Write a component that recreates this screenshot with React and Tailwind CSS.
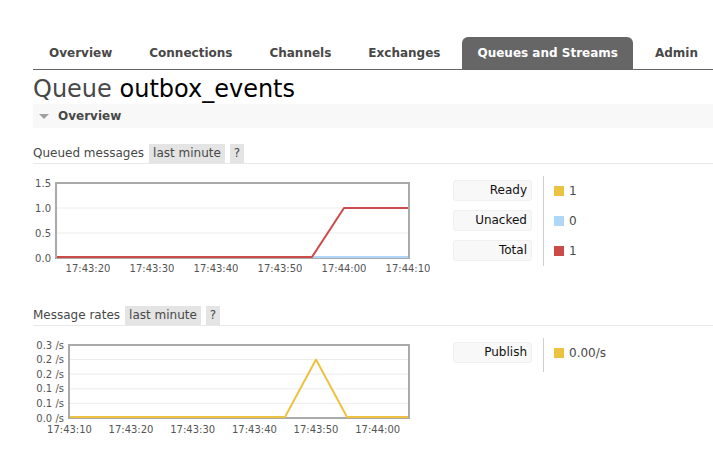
import React from "react";

const tabs = ["Overview", "Connections", "Channels", "Exchanges", "Queues and Streams", "Admin"];
const active = "Queues and Streams";

const SectionHead = ({ title }) => (
  <div className="flex items-stretch h-[20px] border-b border-[#e8e8e8]">
    <span className="leading-[19px] text-[12px] pr-[5px]">{title}</span>
    <span className="leading-[19px] text-[12px] bg-[#e4e4e4] px-[4px]">last minute</span>
    <span className="leading-[19px] text-[12px] bg-[#e4e4e4] px-[4px] ml-[5px]">?</span>
  </div>
);

const Legend = ({ rows, bottom }) => (
  <div className="flex mt-[12px]">
    <div className="flex flex-col gap-[9px] pt-[4px]">
      {rows.map((r) => (
        <div key={r.label} className="w-[79px] h-[21px] bg-[#f8f8f8] border border-[#f0f0f0] rounded-[3px] text-right pr-[4px] text-[12px] leading-[19px] text-[#111]">
          {r.label}
        </div>
      ))}
    </div>
    <div className={"ml-[11px] border-l border-[#cfcfcf] pl-[10px] flex flex-col gap-[9px] pt-[4px] " + bottom}>
      {rows.map((r) => (
        <div key={r.label} className="h-[21px] flex items-center gap-[5px] text-[12px]">
          <span className={"w-[10px] h-[10px] " + r.swatch} />
          <span>{r.value}</span>
        </div>
      ))}
    </div>
  </div>
);

const QueuedChart = () => {
  const yl = [["1.5", 19], ["1.0", 44], ["0.5", 69], ["0.0", 94]];
  const xl = [["17:43:20", 55], ["17:43:30", 119], ["17:43:40", 183], ["17:43:50", 247], ["17:44:00", 311], ["17:44:10", 375]];
  return (
    <svg width="420" height="112" className="shrink-0">
      <rect x="23" y="19" width="353" height="75" fill="#fff" stroke="#aaa" strokeWidth="2" />
      <line x1="24" x2="375" y1="44" y2="44" stroke="#ececec" />
      <line x1="24" x2="375" y1="69" y2="69" stroke="#ececec" />
      <polyline points="279,93 375,93" fill="none" stroke="#afd8f8" strokeWidth="2" />
      <polyline points="24,93 279,93 311,44 375,44" fill="none" stroke="#cb4b4b" strokeWidth="2" strokeLinejoin="round" />
      {yl.map(([t, y]) => (
        <text key={t} x="18" y={y + 3.6} textAnchor="end" fontSize="10" fill="#545454">{t}</text>
      ))}
      {xl.map(([t, x]) => (
        <text key={t} x={x} y="108" textAnchor="middle" fontSize="10" fill="#545454">{t}</text>
      ))}
    </svg>
  );
};

const RatesChart = () => {
  const yl = [["0.3 /s", 19], ["0.2 /s", 33.6], ["0.2 /s", 48.2], ["0.1 /s", 62.8], ["0.1 /s", 77.4], ["0.0 /s", 92]];
  const xl = [["17:43:10", 36.5], ["17:43:20", 98], ["17:43:30", 159.7], ["17:43:40", 221.4], ["17:43:50", 283], ["17:44:00", 344.7]];
  return (
    <svg width="420" height="112" className="shrink-0">
      <rect x="36" y="19" width="340" height="73" fill="#fff" stroke="#aaa" strokeWidth="2" />
      {[33.6, 48.2, 62.8, 77.4].map((y) => (
        <line key={y} x1="37" x2="375" y1={y} y2={y} stroke="#ececec" />
      ))}
      <polyline points="37,91 252,91 283,33.6 314,91 375,91" fill="none" stroke="#edc240" strokeWidth="2" strokeLinejoin="round" />
      {yl.map(([t, y], i) => (
        <text key={i} x="31" y={y + 3.6} textAnchor="end" fontSize="10" fill="#545454">{t}</text>
      ))}
      {xl.map(([t, x]) => (
        <text key={t} x={x} y="107" textAnchor="middle" fontSize="10" fill="#545454">{t}</text>
      ))}
    </svg>
  );
};

export default function App() {
  return (
    <div className="bg-white min-h-[460px] pl-[33px] font-['DejaVu_Sans',sans-serif] text-[#484848] overflow-hidden">
      <ul className="flex gap-[7px] pt-[37px] border-b border-[#666]">
        {tabs.map((t, i) => (
          <li
            key={t}
            className={
              "h-8 shrink-0 whitespace-nowrap flex items-center px-[15px] text-[12px] font-bold rounded-t-[6px] " +
              (i === 0 ? "ml-px " : "") +
              (t === active ? "bg-[#666] text-white" : "text-[#484848]")
            }
          >
            {t}
          </li>
        ))}
      </ul>

      <h1 className="pt-[4px] text-[24px] leading-[30px]">
        Queue <span className="text-black">outbox_events</span>
      </h1>

      <div className="h-[24px] bg-[#f8f8f8] flex items-center">
        <span className="ml-[6px] w-0 h-0 border-l-[5px] border-r-[5px] border-t-[5px] border-l-transparent border-r-transparent border-t-[#a0a0a0]" />
        <span className="ml-[9px] text-[12px] font-bold">Overview</span>
      </div>

      <div className="mt-4">
        <SectionHead title="Queued messages" />
        <div className="flex items-start h-[142px]">
          <QueuedChart />
          <Legend
            bottom="pb-[5px]"
            rows={[
              { label: "Ready", value: "1", swatch: "bg-[#edc240]" },
              { label: "Unacked", value: "0", swatch: "bg-[#afd8f8]" },
              { label: "Total", value: "1", swatch: "bg-[#cb4b4b]" },
            ]}
          />
        </div>
      </div>

      <div>
        <SectionHead title="Message rates" />
        <div className="flex items-start">
          <RatesChart />
          <Legend bottom="pb-[9px]" rows={[{ label: "Publish", value: "0.00/s", swatch: "bg-[#edc240]" }]} />
        </div>
      </div>
    </div>
  );
}
